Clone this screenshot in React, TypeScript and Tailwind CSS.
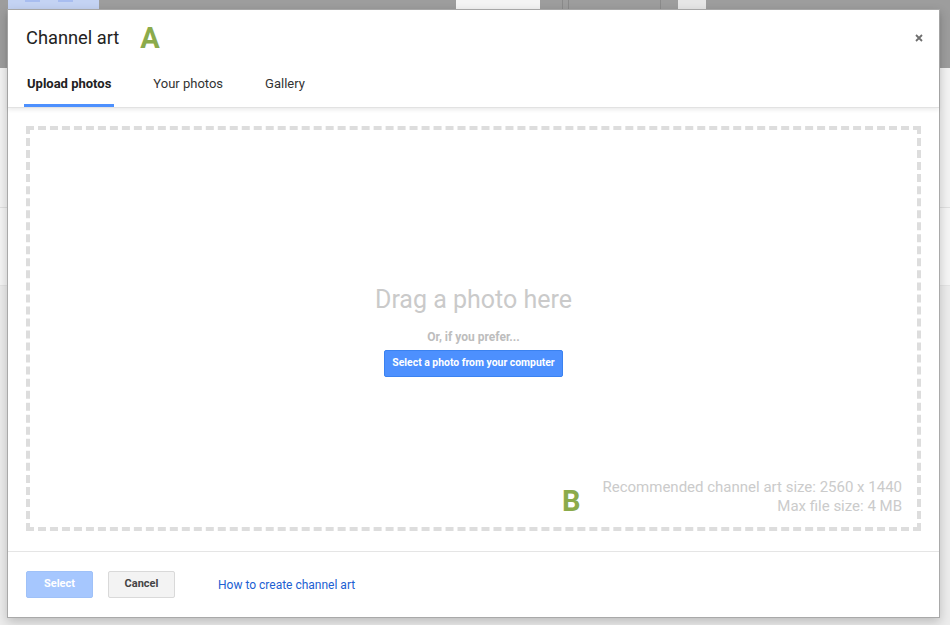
import React from "react";

export default function App() {
  return (
    <div
      className="relative w-[950px] h-[625px] overflow-hidden bg-[#eeeeee]"
      style={{ fontFamily: "Roboto, 'Liberation Sans', Arial, sans-serif" }}
    >
      {/* page behind the overlay */}
      <div className="flex flex-col h-full">
        <div className="relative h-[68px] bg-[#9d9d9d] shrink-0">
          <div className="absolute left-[8px] top-0 w-[91px] h-[10px] bg-[#c4d3f3] flex gap-[18px] px-[17px]">
            <div className="w-[15px] h-[2px] mt-0 bg-[#a8bdf0]" />
            <div className="w-[15px] h-[2px] bg-[#a8bdf0]" />
          </div>
          <div className="absolute left-[456px] top-0 w-[84px] h-[10px] bg-[#f4f4f4]" />
          <div className="absolute left-[562px] top-0 w-[1px] h-[10px] bg-[#8a8a8a]" />
          <div className="absolute left-[568px] top-0 w-[1px] h-[10px] bg-[#8a8a8a]" />
          <div className="absolute left-[660px] top-0 w-[1px] h-[10px] bg-[#8a8a8a]" />
          <div className="absolute left-[678px] top-0 w-[28px] h-[10px] bg-[#e6e6e6]" />
        </div>
        <div className="h-[140px] bg-[#f3f3f3] border-b border-[#e0e0e0] shrink-0" />
        <div className="h-[78px] bg-[#f5f5f5] border-b border-[#e4e4e4] shrink-0" />
        <div className="flex-1 bg-[#ececec]" />
      </div>

      {/* dialog */}
      <div className="absolute left-[7px] top-[9px] w-[933px] h-[609px] bg-white border border-[#a9a9a9] shadow-[0_4px_10px_rgba(0,0,0,0.2)] flex flex-col">
        {/* header */}
        <div className="relative border-b border-[#e2e2e2] shadow-[0_2px_4px_rgba(0,0,0,0.08)] z-10">
          <div className="flex items-center pl-[18px] pt-[16px] h-[40px]">
            <span className="text-[18.3px] leading-[24px] text-[#222]">Channel art</span>
            <span className="ml-[21px] text-[29px] leading-[24px] font-bold text-[#8bab4b]">A</span>
          </div>
          <button className="absolute right-[15px] top-[23px] w-[10px] h-[10px] flex items-center justify-center">
            <svg width="8" height="8" viewBox="0 0 8 8">
              <path d="M1 1L7 7M7 1L1 7" stroke="#6f6f6f" strokeWidth="1.8" />
            </svg>
          </button>
          <div className="flex gap-[36px] pl-[16px] mt-[26px] text-[13px] leading-[16px]">
            <div className="px-[3px] pb-[12px] border-b-[3px] border-[#4d90fe] font-bold text-[#222]">Upload photos</div>
            <div className="px-[3px] pb-[12px] border-b-[3px] border-transparent text-[#333]">Your photos</div>
            <div className="px-[3px] pb-[12px] border-b-[3px] border-transparent text-[#333]">Gallery</div>
          </div>
        </div>

        {/* body */}
        <div className="flex-1 px-[18px] pt-[18px] pb-[20px] border-b border-[#e5e5e5]">
          <div className="relative h-full border-[4px] border-dashed border-[#dddddd] flex flex-col items-center justify-center">
            <div className="text-[25px] leading-[28px] text-[#cacaca] mt-[5px]">Drag a photo here</div>
            <div className="mt-[15px] text-[12px] leading-[16px] font-bold text-[#bdbdbd]">Or, if you prefer...</div>
            <button className="mt-[5px] h-[27px] px-[7px] rounded-[2px] bg-[#4d90fe] border border-[#3b82f0] text-white text-[10.4px] font-bold">
              Select a photo from your computer
            </button>
            <div className="absolute right-[15px] bottom-[11px] flex items-center">
              <span className="text-[29px] leading-[30px] font-bold text-[#8bab4b] mr-[22px] mt-[8px]">B</span>
              <div className="text-right text-[15px] leading-[19px] text-[#cbcbcb]">
                <div>Recommended channel art size: 2560 x 1440</div>
                <div>Max file size: 4 MB</div>
              </div>
            </div>
          </div>
        </div>

        {/* footer */}
        <div className="flex items-center pl-[18px] pt-[19px] pb-[19px]">
          <button className="w-[67px] h-[27px] rounded-[2px] bg-[#a6c7fe] border border-[#9fc1f8] text-white text-[11px] font-bold">
            Select
          </button>
          <button className="ml-[15px] w-[67px] h-[27px] rounded-[2px] bg-[#f3f3f3] border border-[#d9d9d9] text-[#444] text-[11px] font-bold">
            Cancel
          </button>
          <a className="ml-[43px] text-[12px] mt-[1px] text-[#2160d2] cursor-pointer">How to create channel art</a>
        </div>
      </div>
    </div>
  );
}
